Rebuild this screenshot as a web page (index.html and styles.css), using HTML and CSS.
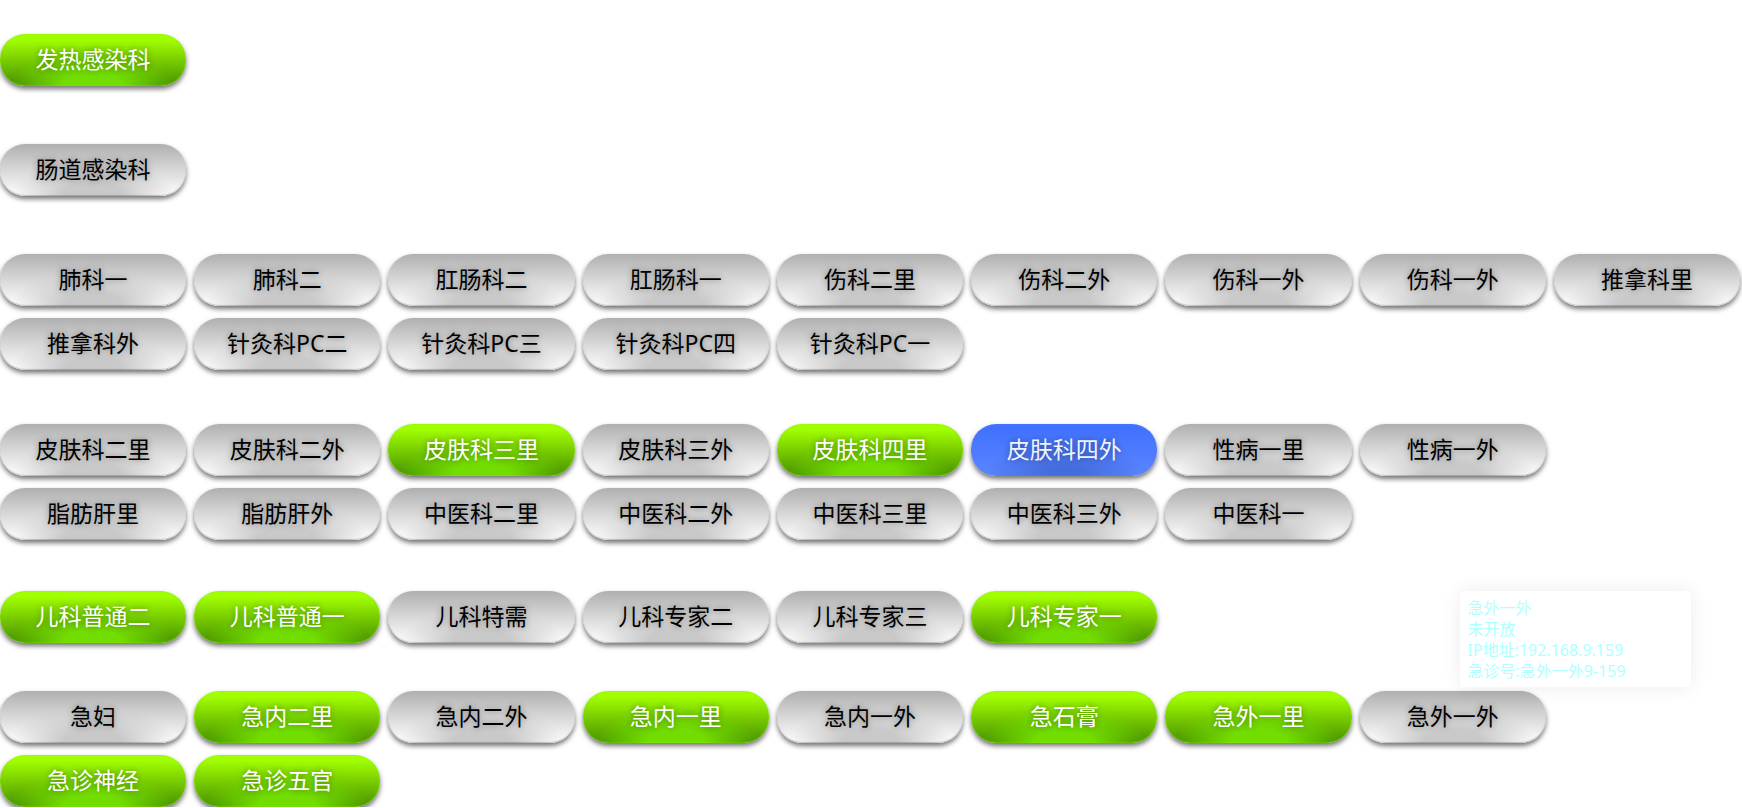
FILE: index.html
```html
<!DOCTYPE html>
<html lang="zh-CN">
<head>
<meta charset="utf-8">
<meta name="viewport" content="width=device-width, initial-scale=1">
<title>诊室状态</title>
<link rel="stylesheet" href="styles.css">
</head>
<body>
<main class="board">
  <section class="group">
    <button type="button" class="room open">发热感染科</button>
  </section>
  <section class="group group-wide">
    <button type="button" class="room">肠道感染科</button>
  </section>
  <section class="group group-wide">
    <button type="button" class="room">肺科一</button>
    <button type="button" class="room">肺科二</button>
    <button type="button" class="room">肛肠科二</button>
    <button type="button" class="room">肛肠科一</button>
    <button type="button" class="room">伤科二里</button>
    <button type="button" class="room">伤科二外</button>
    <button type="button" class="room">伤科一外</button>
    <button type="button" class="room">伤科一外</button>
    <button type="button" class="room">推拿科里</button>
    <button type="button" class="room">推拿科外</button>
    <button type="button" class="room">针灸科PC二</button>
    <button type="button" class="room">针灸科PC三</button>
    <button type="button" class="room">针灸科PC四</button>
    <button type="button" class="room">针灸科PC一</button>
  </section>
  <section class="group group-medium">
    <button type="button" class="room">皮肤科二里</button>
    <button type="button" class="room">皮肤科二外</button>
    <button type="button" class="room open">皮肤科三里</button>
    <button type="button" class="room">皮肤科三外</button>
    <button type="button" class="room open">皮肤科四里</button>
    <button type="button" class="room paused">皮肤科四外</button>
    <button type="button" class="room">性病一里</button>
    <button type="button" class="room">性病一外</button>
    <button type="button" class="room row-start">脂肪肝里</button>
    <button type="button" class="room">脂肪肝外</button>
    <button type="button" class="room">中医科二里</button>
    <button type="button" class="room">中医科二外</button>
    <button type="button" class="room">中医科三里</button>
    <button type="button" class="room">中医科三外</button>
    <button type="button" class="room">中医科一</button>
  </section>
  <section class="group group-snug">
    <button type="button" class="room open">儿科普通二</button>
    <button type="button" class="room open">儿科普通一</button>
    <button type="button" class="room">儿科特需</button>
    <button type="button" class="room">儿科专家二</button>
    <button type="button" class="room">儿科专家三</button>
    <button type="button" class="room open">儿科专家一</button>
  </section>
  <section class="group group-tight">
    <button type="button" class="room">急妇</button>
    <button type="button" class="room open">急内二里</button>
    <button type="button" class="room">急内二外</button>
    <button type="button" class="room open">急内一里</button>
    <button type="button" class="room">急内一外</button>
    <button type="button" class="room open">急石膏</button>
    <button type="button" class="room open">急外一里</button>
    <div class="room-slot">
      <button type="button" class="room" aria-describedby="room-tip">急外一外</button>
      <div class="tip" id="room-tip" role="tooltip">急外一外<br>未开放<br>IP地址:192.168.9.159<br>急诊号:急外一外9-159</div>
    </div>
    <button type="button" class="room open row-start">急诊神经</button>
    <button type="button" class="room open">急诊五官</button>
  </section>
</main>
</body>
</html>
```
FILE: styles.css
```css
* {
  box-sizing: border-box;
}

body {
  margin: 0;
  background: #fff;
  font-family: "Noto Sans", "Noto Sans CJK SC", sans-serif;
}

.board {
  padding: 34px 2px 0 0;
}

.group {
  display: grid;
  grid-template-columns: repeat(9, minmax(0, 1fr));
  gap: 12px 8px;
}

.group-wide { margin-top: 58px; }
.group-medium { margin-top: 54px; }
.group-snug { margin-top: 51px; }
.group-tight { margin-top: 48px; }

.row-start {
  grid-column-start: 1;
}

.room {
  width: 100%;
  height: 52px;
  padding: 0 0 2px;
  border: 0;
  border-radius: 25px;
  font: 400 23px/50px "Noto Sans", "Noto Sans CJK SC", sans-serif;
  white-space: nowrap;
  color: #000;
  background:
    radial-gradient(ellipse 44% 75% at 50% 100%, #c9c9c9 35%, rgba(201, 201, 201, 0) 100%),
    linear-gradient(#b0b0b0, #fff);
  box-shadow: 0 3px 5px rgba(0, 0, 0, 0.55), inset 0 -1px 1px rgba(0, 0, 0, 0.2);
  text-shadow: 0 0 6px rgba(0, 0, 0, 0.4);
  cursor: pointer;
}

.open {
  color: #fff;
  background:
    radial-gradient(ellipse 44% 75% at 50% 100%, #72dd00 35%, rgba(114, 221, 0, 0) 100%),
    linear-gradient(#a2ff00 10%, #479000);
  box-shadow: 0 3px 5px rgba(0, 0, 0, 0.55), inset 0 0 2px #82ee00;
}

.paused {
  color: #f0f4ff;
  background:
    radial-gradient(ellipse 44% 75% at 50% 100%, #456cdb 20%, rgba(69, 108, 219, 0) 100%),
    linear-gradient(#3f6fff, #5b86ff);
  box-shadow: 0 3px 5px rgba(0, 0, 0, 0.55), inset 0 0 2px #5580ff;
}

.room-slot {
  position: relative;
}

.tip {
  position: absolute;
  left: 100px;
  bottom: calc(100% + 4px);
  width: 231px;
  padding: 7px 8px 5px;
  border-radius: 4px;
  background: #fff;
  box-shadow: 0 0 20px rgba(0, 0, 0, 0.08);
  font-size: 16px;
  line-height: 21px;
  color: #b0ffff;
}
```
